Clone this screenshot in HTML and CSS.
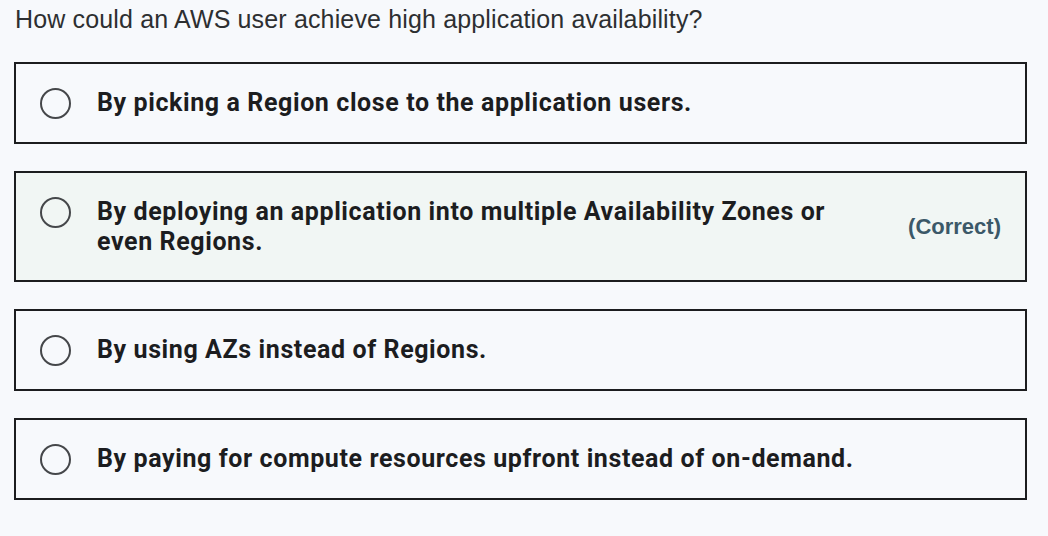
FILE: index.html
```html
<!DOCTYPE html>
<html lang="en">

<head>
  <meta charset="UTF-8">
  <meta name="viewport" content="width=device-width, initial-scale=1.0">
  <title>Quiz question</title>
  <link rel="stylesheet" href="styles.css">
</head>

<body>
  <div class="quiz">
    <p class="question">How could an AWS user achieve high application availability?</p>

    <ul class="options">
      <li class="option">
        <span class="radio"></span>
        <span class="answer">By picking a Region close to the application users.</span>
      </li>
      <li class="option option-correct">
        <span class="radio"></span>
        <span class="answer">By deploying an application into multiple Availability Zones or even Regions.</span>
        <span class="tag">(Correct)</span>
      </li>
      <li class="option">
        <span class="radio"></span>
        <span class="answer">By using AZs instead of Regions.</span>
      </li>
      <li class="option">
        <span class="radio"></span>
        <span class="answer">By paying for compute resources upfront instead of on-demand.</span>
      </li>
    </ul>
  </div>
</body>

</html>
```
FILE: styles.css
```css
body {
  margin: 0;
  background-color: #f7f9fc;
  font-family: 'Liberation Sans', Arial, sans-serif;
}

.quiz {
  padding: 5px 21px 0 14px;
}

.question {
  margin: 0 0 28px 1px;
  font-size: 25px;
  line-height: 29px;
  letter-spacing: 0.15px;
  color: #2d2f31;
}

.options {
  list-style: none;
  margin: 0;
  padding: 0;
  display: flex;
  flex-direction: column;
  gap: 27px;
}

.option {
  display: flex;
  align-items: flex-start;
  padding: 24px 24px 23px;
  border: 2px solid #1c1d1f;
  background-color: #f7f9fc;
}

.option-correct {
  background-color: #f1f6f4;
}

.radio {
  flex: none;
  box-sizing: border-box;
  width: 31px;
  height: 31px;
  margin-right: 26px;
  border: 2px solid #45474a;
  border-radius: 50%;
}

.answer {
  flex: 1;
  font-family: Roboto, 'Liberation Sans', sans-serif;
  font-weight: 700;
  font-size: 25px;
  line-height: 30px;
  letter-spacing: 0.6px;
  color: #1c1d1f;
}

.tag {
  flex: none;
  align-self: center;
  margin-left: 48px;
  font-weight: 700;
  font-size: 22px;
  color: #3b5868;
}
```
